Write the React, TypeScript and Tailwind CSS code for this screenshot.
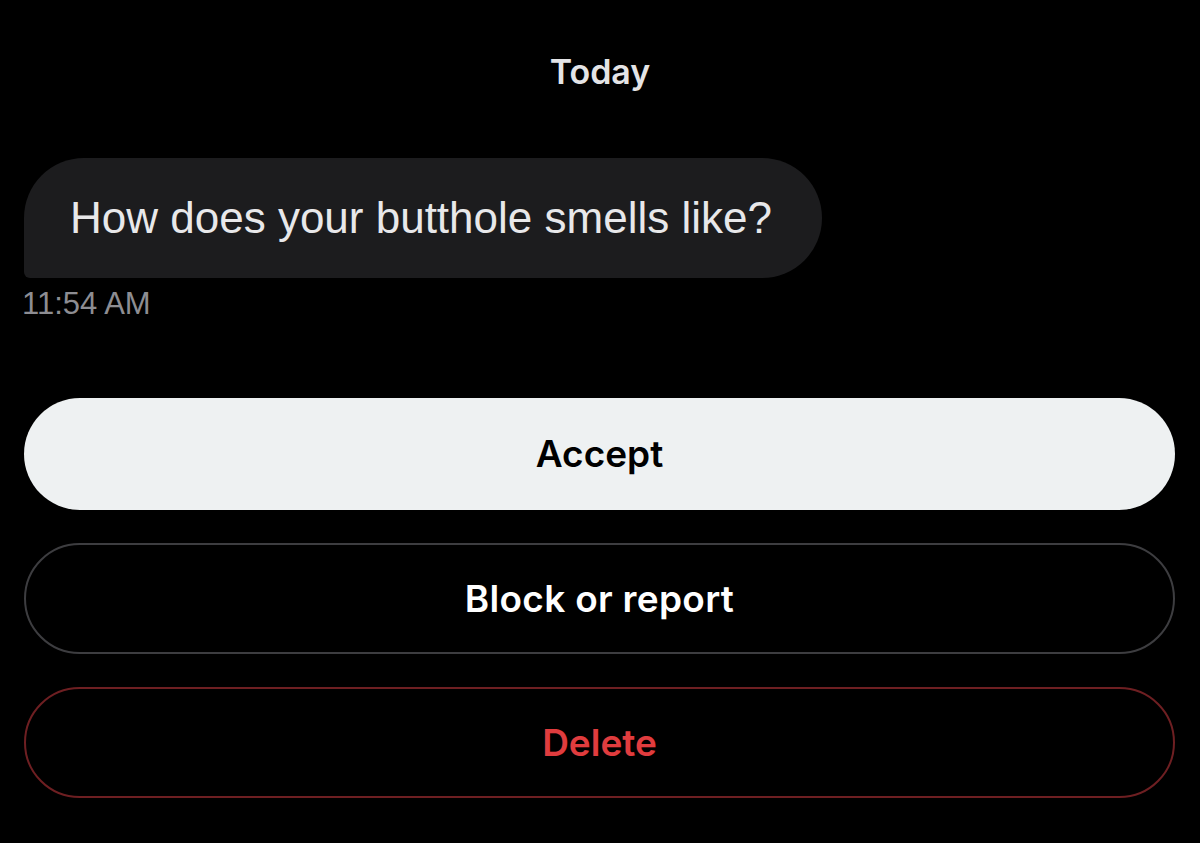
export default function App() {
  return (
    <div className="w-[1200px] h-[843px] bg-black overflow-hidden font-['Inter',sans-serif]">
      {/* date header */}
      <div className="pt-[52px] text-center text-[34px] leading-[40px] font-semibold text-[#e4e4e6]">
        Today
      </div>

      {/* incoming message */}
      <div className="mt-[66px] pl-6">
        <div className="w-[798px] h-[120px] bg-[#1c1c1e] rounded-tl-[60px] rounded-tr-[60px] rounded-br-[60px] rounded-bl-[6px] flex items-center pl-[46px]">
          <span className="font-['Liberation_Sans',sans-serif] text-[44px] text-[#e8e8ea]">
            How does your butthole smells like?
          </span>
        </div>
        <div className="mt-[8px] -ml-[2px] font-['Liberation_Sans',sans-serif] text-[31px] leading-[36px] text-[#8d8d92]">
          11:54 AM
        </div>
      </div>

      {/* actions */}
      <div className="mt-[76px] px-6 flex flex-col gap-[33px] pr-[25px]">
        <button className="h-[112px] rounded-full bg-[#eef1f2] text-[37px] font-semibold text-black">
          Accept
        </button>
        <button className="h-[111px] rounded-full border-2 border-[#3d3d40] text-[37px] font-semibold text-white tracking-[0.3px]">
          Block or report
        </button>
        <button className="h-[111px] rounded-full border-2 border-[#6e1f22] text-[37px] font-semibold text-[#e03c3e]">
          Delete
        </button>
      </div>
    </div>
  );
}
